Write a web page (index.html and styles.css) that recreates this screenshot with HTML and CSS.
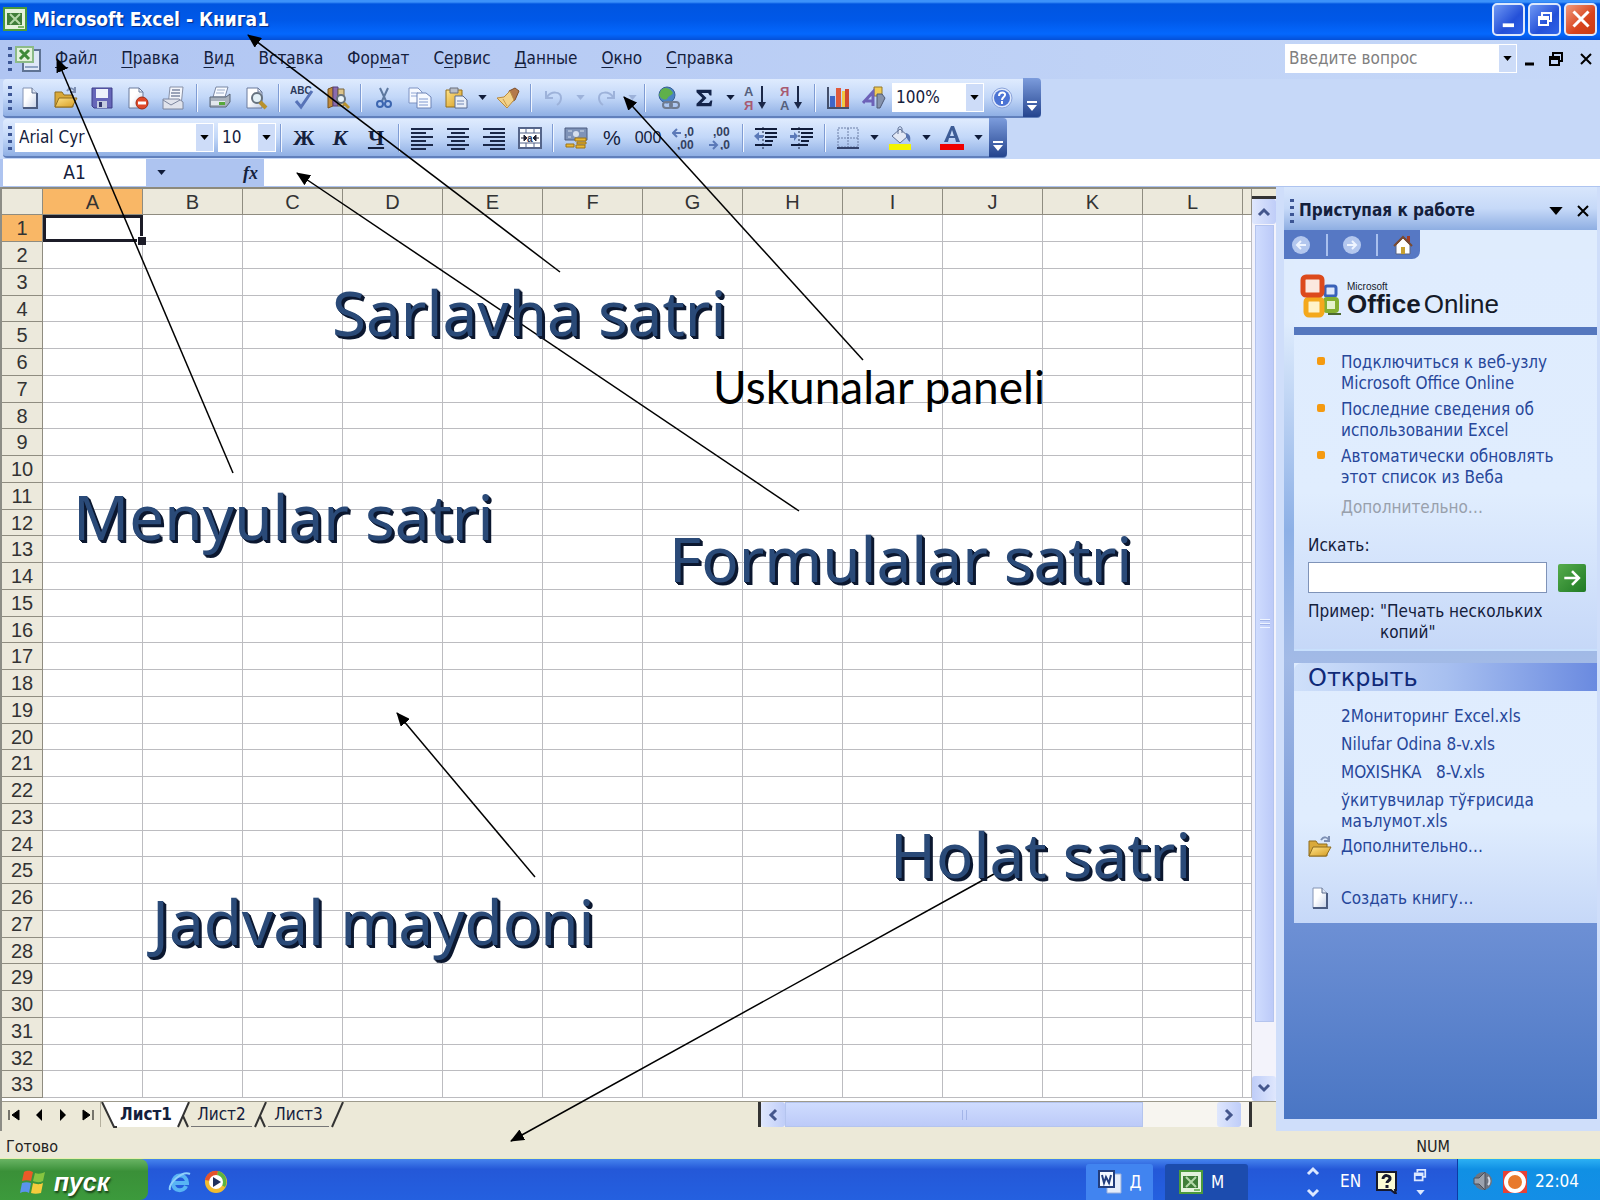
FILE: index.html
```html
<!DOCTYPE html>
<html lang="ru">
<head>
<meta charset="utf-8">
<title>Microsoft Excel - Книга1</title>
<link rel="stylesheet" href="styles.css">
</head>
<body>
<svg class="defs" aria-hidden="true">
  <defs>
    <linearGradient id="gold" x1="0" y1="0" x2="1" y2="1"><stop offset="0" stop-color="#ffe48a"/><stop offset="1" stop-color="#d49a20"/></linearGradient>
    <linearGradient id="paper" x1="0" y1="0" x2="1" y2="1"><stop offset="0.4" stop-color="#fff"/><stop offset="1" stop-color="#c3cfe6"/></linearGradient>
    <marker id="head" viewBox="0 0 14 12" refX="13" refY="6" markerWidth="14" markerHeight="12" markerUnits="userSpaceOnUse" orient="auto"><path d="M0 0L14 6L0 12z"/></marker>
  </defs>
</svg>
<svg class="sprite" aria-hidden="true">
  <symbol id="i-new" viewBox="0 0 24 24"><path d="M5 2h9l5 5v15H5z" fill="url(#paper)" stroke="#8494b4"/><path d="M19 7v15H5" fill="none" stroke="#4b5c80" stroke-width="2"/><path d="M14 2v5h5" fill="#dde6f6" stroke="#5d6c8c"/></symbol>
  <symbol id="i-open" viewBox="0 0 24 24"><path d="M1 21V6h7l2 3h9v12z" fill="#d9a93a" stroke="#8f6d1e"/><path d="M1 21l4-9h18l-5 9z" fill="url(#gold)" stroke="#8f6d1e"/><path d="M13 5c3-4 6-3 8 0m0-4v5h-5" fill="none" stroke="#7d8fb4" stroke-width="2"/></symbol>
  <symbol id="i-save" viewBox="0 0 24 24"><path d="M2 2h20v20H4l-2-2z" fill="#6666b8" stroke="#3d3d88"/><path d="M6 3h12v9H6z" fill="#eef2fb"/><path d="M7 15h10v7H7z" fill="#c4cbe0"/><path d="M9 16h3v5H9z" fill="#33366e"/></symbol>
  <symbol id="i-perm" viewBox="0 0 24 24"><path d="M3 2h10l4 4v16H3z" fill="url(#paper)" stroke="#6b7a9c"/><path d="M13 2v4h4" fill="none" stroke="#6b7a9c"/><circle cx="16" cy="17" r="6" fill="#e0492a" stroke="#a12c14"/><path d="M12 15.500h8v3h-8z" fill="#fff"/></symbol>
  <symbol id="i-mail" viewBox="0 0 24 24"><path d="M8 1h13l-2 19H6z" fill="#f4f6fb" stroke="#8790a6"/><path d="M10 4h8M9 7h9M9 10h9" stroke="#9aa3b8" stroke-width="2"/><path d="M1 13h16l4 3v7H1z" fill="#e0e3ec" stroke="#7d869e"/><path d="M1 14l8 5 9-5" fill="none" stroke="#7d869e"/></symbol>
  <symbol id="i-print" viewBox="0 0 24 24"><path d="M8 1h12l-3 10H5z" fill="#f7faff" stroke="#7b88a4"/><path d="M9 4h8M8 7h8" stroke="#9dadc8"/><path d="M2 11h16l4-3v8l-4 5H2z" fill="#a9b2bd" stroke="#5b6678"/><path d="M3 15h14v4H3z" fill="#e3e8ee"/><path d="M11 16h6v3h-6z" fill="#57a83a"/></symbol>
  <symbol id="i-preview" viewBox="0 0 24 24"><path d="M3 2h11l4 4v16H3z" fill="url(#paper)" stroke="#6b7a9c"/><path d="M14 2v4h4" fill="none" stroke="#6b7a9c"/><circle cx="13" cy="12" r="5" fill="#e3f0f6" stroke="#66727e" stroke-width="2"/><path d="M16 16l6 6" stroke="#b8912c" stroke-width="4"/></symbol>
  <symbol id="i-spell" viewBox="0 0 24 24"><text x="0" y="8" class="t-abc">ABC</text><path d="M6 15l5 6L22 5" fill="none" stroke="#5773b8" stroke-width="3"/></symbol>
  <symbol id="i-research" viewBox="0 0 24 24"><path d="M2 3l5-2v19l-5 2z" fill="#c08a3c" stroke="#77521f"/><path d="M7 1h5v19H7z" fill="#8a6cae" stroke="#553e78"/><path d="M12 3h6v17h-6z" fill="#dcc48c" stroke="#77623a"/><circle cx="15" cy="13" r="4" fill="#e8f3fa" stroke="#66727e" stroke-width="2"/><path d="M18 17l5 5" stroke="#b8912c" stroke-width="3"/></symbol>
  <symbol id="i-cut" viewBox="0 0 24 24"><path d="M8 2l6 13M16 2l-6 13" stroke="#5d789f" stroke-width="2"/><circle cx="8" cy="18" r="3" fill="none" stroke="#3c66b0" stroke-width="2"/><circle cx="16" cy="18" r="3" fill="none" stroke="#3c66b0" stroke-width="2"/></symbol>
  <symbol id="i-copy" viewBox="0 0 24 24"><path d="M1 2h9l4 4v11H1z" fill="#f6f9ff" stroke="#7e93c2"/><path d="M3 7h7M3 10h7" stroke="#8fa5d4"/><path d="M9 7h9l5 4v11H9z" fill="#f6f9ff" stroke="#6d83b6"/><path d="M11 13h9M11 16h9M11 19h9" stroke="#7f98cf"/></symbol>
  <symbol id="i-paste" viewBox="0 0 24 24"><path d="M2 4h16v17H2z" fill="url(#gold)" stroke="#946e18"/><path d="M6 2h8v5H6z" fill="#b9bec8" stroke="#6a6f7a"/><path d="M11 10h8l4 4v8H11z" fill="#e8eef8" stroke="#5b6c92"/><path d="M13 15h7M13 18h7" stroke="#7086b4"/></symbol>
  <symbol id="i-brush" viewBox="0 0 24 24"><path d="M13 5l6-3 4 3-4 9-4 2z" fill="#b4794a" stroke="#7e4f2c"/><path d="M1 12l7-1 6-6 4 9-7 8z" fill="#f2d28a" stroke="#b98a3f"/><path d="M7 13l4 7" stroke="#c99a4c"/></symbol>
  <symbol id="i-undo" viewBox="0 0 24 24"><path d="M4 5v7h7M5 11c4-6 14-6 14 1 0 3-1 5-4 7" fill="none" stroke="#9db2da" stroke-width="2"/></symbol>
  <symbol id="i-redo" viewBox="0 0 24 24"><path d="M20 5v7h-7M19 11C15 5 5 5 5 12c0 3 1 5 4 7" fill="none" stroke="#9db2da" stroke-width="2"/></symbol>
  <symbol id="i-link" viewBox="0 0 24 24"><circle cx="11" cy="9" r="8" fill="#4a83c4" stroke="#375f94"/><path d="M5 4c5-4 10-1 12 3-2 3-4 2-6 6-4 2-7-2-8-4z" fill="#5fb04a"/><rect x="7" y="16" width="9" height="6" rx="3" fill="none" stroke="#6f7b90" stroke-width="2"/><rect x="14" y="16" width="9" height="6" rx="3" fill="none" stroke="#6f7b90" stroke-width="2"/></symbol>
  <symbol id="i-sum" viewBox="0 0 24 24"><path d="M3 2h18v7h-2l-2-3H9l6 6-6 6h9l2-3h2l-1 7H3v-3l7-7-7-7z" fill="#14244a"/></symbol>
  <symbol id="i-sorta" viewBox="0 0 24 24"><text x="0" y="10" class="t-sort">А</text><text x="0" y="24" class="t-sort t-red">Я</text><path d="M18 0v18" stroke="#1a2748" stroke-width="2"/><path d="M14 16h8l-4 7z" fill="#1a2748"/></symbol>
  <symbol id="i-sortz" viewBox="0 0 24 24"><text x="0" y="10" class="t-sort t-red">Я</text><text x="0" y="24" class="t-sort">А</text><path d="M18 0v18" stroke="#1a2748" stroke-width="2"/><path d="M14 16h8l-4 7z" fill="#1a2748"/></symbol>
  <symbol id="i-chart" viewBox="0 0 24 24"><path d="M2 1v21h21" fill="none" stroke="#44506c" stroke-width="2"/><path d="M4 10h5v11H4z" fill="#3f66c8"/><path d="M10 2h5v19h-5z" fill="#e05a3c"/><path d="M16 5h3v16h-3z" fill="#f0c840"/><path d="M19 3h4v18h-4z" fill="#cf4a32"/></symbol>
  <symbol id="i-draw" viewBox="0 0 24 24"><path d="M12 1h8v9h-8z" fill="#f1cb52" stroke="#94782a"/><path d="M15 8h5l3 4-5 10h-3z" fill="#8693ac" stroke="#4f5a74"/><path d="M1 17L11 6v14M4 15h8" fill="none" stroke="#6d62b8" stroke-width="3"/></symbol>
  <symbol id="i-help" viewBox="0 0 24 24"><circle cx="12" cy="12" r="10" fill="#dfe9fc" stroke="#8ca4da"/><circle cx="12" cy="12" r="8" fill="#4c74d4"/><path d="M9 10c0-5 7-4 6-1 0 2-3 2-3 5m0 1v3" fill="none" stroke="#fff" stroke-width="2"/></symbol>
  <symbol id="i-left" viewBox="0 0 24 24"><path d="M1 3h22M1 7h15M1 11h22M1 15h15M1 19h22M1 23h15" stroke="#1a2748" stroke-width="2"/></symbol>
  <symbol id="i-center" viewBox="0 0 24 24"><path d="M1 3h22M5 7h14M1 11h22M5 15h14M1 19h22M5 23h14" stroke="#1a2748" stroke-width="2"/></symbol>
  <symbol id="i-right" viewBox="0 0 24 24"><path d="M1 3h22M8 7h15M1 11h22M8 15h15M1 19h22M8 23h15" stroke="#1a2748" stroke-width="2"/></symbol>
  <symbol id="i-merge" viewBox="0 0 24 24"><path d="M1 2h22v20H1z" fill="#fff" stroke="#55658a" stroke-width="2"/><path d="M1 7h22M1 17h22M8 2v5M16 2v5M8 17v5M16 17v5" stroke="#55658a"/><path d="M3 12h4M17 12h4M6 9l3 3-3 3zM18 9l-3 3 3 3z" fill="#223" stroke="#223"/><text x="9" y="16" class="t-abc">a</text></symbol>
  <symbol id="i-money" viewBox="0 0 24 24"><path d="M1 2h22v12H1z" fill="#7f93b8" stroke="#4c5c80"/><circle cx="12" cy="8" r="3" fill="#d6dfee"/><path d="M4 5h4M16 5h4M4 11h3" stroke="#d6dfee"/><path d="M11 12h11v3H11zM13 16h9v2h-9zM12 19h9v3h-9zM2 18h8v3H2z" fill="#e9b834" stroke="#9c7317"/></symbol>
  <symbol id="i-inc" viewBox="0 0 24 24"><path d="M1 7h8M5 3L1 7l4 4" fill="none" stroke="#5b79b8" stroke-width="2"/><text x="12" y="10" class="t-num">,0</text><text x="5" y="23" class="t-num">,00</text></symbol>
  <symbol id="i-dec" viewBox="0 0 24 24"><text x="5" y="10" class="t-num">,00</text><text x="12" y="23" class="t-num">,0</text><path d="M1 19h8M5 15l4 4-4 4" fill="none" stroke="#5b79b8" stroke-width="2"/></symbol>
  <symbol id="i-outdent" viewBox="0 0 24 24"><path d="M1 3h22M11 7h12M11 11h12M11 15h8M1 19h17" stroke="#101c3a" stroke-width="2"/><path d="M9 1v22" stroke="#101c3a" stroke-dasharray="2 2"/><path d="M0 10l5-4v3h4v3H5v3z" fill="#5b79b8"/></symbol>
  <symbol id="i-indent" viewBox="0 0 24 24"><path d="M1 3h22M11 7h12M11 11h12M11 15h8M1 19h17" stroke="#101c3a" stroke-width="2"/><path d="M9 1v22" stroke="#101c3a" stroke-dasharray="2 2"/><path d="M8 10L4 6v3H0v3h4v3z" fill="#5b79b8"/></symbol>
  <symbol id="i-border" viewBox="0 0 24 24"><path d="M2 2h20v19H2zM12 2v19M2 12h20" fill="none" stroke="#6d7ea6" stroke-dasharray="2 1"/><path d="M1 22h22" stroke="#33436c" stroke-width="2"/></symbol>
  <symbol id="i-fill" viewBox="0 0 24 24"><path d="M4 10l8-7 8 7-8 7z" fill="#e3e9f5" stroke="#5f6f92"/><path d="M10 8V3c0-3 4-3 4 0v4" fill="none" stroke="#5f6f92"/><path d="M18 7c4 1 5 4 4 9-2-1-3-4-4-5z" fill="#5874b0"/><path d="M1 18h22v6H1z" fill="#f4f400"/></symbol>
  <symbol id="i-color" viewBox="0 0 24 24"><path d="M4 16L11 0h3l6 16h-4l-1-4H9l-1 4zM10 10h4l-2-6z" fill="#3d5c96" fill-rule="evenodd"/><path d="M0 18h24v6H0z" fill="#f00000"/></symbol>
  <symbol id="i-excel" viewBox="0 0 24 24"><path d="M1 1h22v22H1z" fill="#e4f2dc" stroke="#4c9a3c" stroke-width="2"/><path d="M4 6h15v12H4z" fill="#3f7d38"/><path d="M7 7l10 10M17 7L7 17" stroke="#b4d8a8" stroke-width="2"/><path d="M15 20h6" stroke="#7bb96a" stroke-width="2"/></symbol>
  <symbol id="i-book" viewBox="0 0 28 28"><path d="M9 5h17v21H9z" fill="#dfe8f8" stroke="#5f7394" stroke-width="2"/><path d="M11 22h13" stroke="#8fa4c4" stroke-width="2"/><path d="M2 2h17v15H2z" fill="#e4f2dc" stroke="#8dbb88" stroke-width="2"/><path d="M6 5l9 9M15 5l-9 9" stroke="#3f8a3a" stroke-width="3"/></symbol>
  <symbol id="i-word" viewBox="0 0 24 24"><path d="M9 4h14v19H9z" fill="#e4ecfa" stroke="#9ab0dc"/><path d="M1 1h15v16H1z" fill="#f4f8ff" stroke="#223d7c" stroke-width="2"/><path d="M4 5l2 8 2-6 3 6 2-8" fill="none" stroke="#223d7c" stroke-width="2"/></symbol>
  <symbol id="i-restore" viewBox="0 0 16 16"><path d="M5 5V2h9v8h-3" fill="none" stroke="currentColor" stroke-width="2"/><path d="M2 6h9v8H2zM2 8h9" fill="none" stroke="currentColor" stroke-width="2"/></symbol>
  <symbol id="i-min" viewBox="0 0 16 16"><path d="M3 13h9" stroke="currentColor" stroke-width="3"/></symbol>
  <symbol id="i-x" viewBox="0 0 16 16"><path d="M3 3l10 10M13 3L3 13" stroke="currentColor" stroke-width="2"/></symbol>
  <symbol id="i-down" viewBox="0 0 10 6"><path d="M0 0h10L5 6z" fill="currentColor"/></symbol>
  <symbol id="i-more" viewBox="0 0 10 10"><path d="M0 0h10v2H0zM0 4h10L5 10z" fill="currentColor"/></symbol>
  <symbol id="i-chev" viewBox="0 0 14 14"><path d="M2 10l5-5 5 5" fill="none" stroke="currentColor" stroke-width="3"/></symbol>
</svg>

<header class="titlebar">
  <svg class="ico"><use href="#i-excel"/></svg>
  <h1>Microsoft Excel - Книга1</h1>
  <button class="win" aria-label="Свернуть"><svg class="ico20"><use href="#i-min"/></svg></button>
  <button class="win" aria-label="Восстановить"><svg class="ico16"><use href="#i-restore"/></svg></button>
  <button class="win close" aria-label="Закрыть"><svg class="ico24"><use href="#i-x"/></svg></button>
</header>

<nav class="menubar">
  <span class="grip"></span>
  <svg class="ico28"><use href="#i-book"/></svg>
  <div class="menus">
    <button><u>Ф</u>айл</button><button><u>П</u>равка</button><button><u>В</u>ид</button><button>Вст<u>а</u>вка</button><button>Фор<u>м</u>ат</button><button>С<u>е</u>рвис</button><button><u>Д</u>анные</button><button><u>О</u>кно</button><button><u>С</u>правка</button>
  </div>
  <div class="ask combo"><input type="text" placeholder="Введите вопрос" aria-label="Введите вопрос"><span class="drop"><svg class="tri"><use href="#i-down"/></svg></span></div>
  <button class="doc" aria-label="Свернуть окно"><svg class="ico16"><use href="#i-min"/></svg></button>
  <button class="doc" aria-label="Восстановить окно"><svg class="ico16"><use href="#i-restore"/></svg></button>
  <button class="doc" aria-label="Закрыть окно"><svg class="ico16"><use href="#i-x"/></svg></button>
</nav>

<div class="bars">
  <div class="toolbar">
    <span class="grip"></span>
    <button class="tb" aria-label="Создать"><svg class="ico"><use href="#i-new"/></svg></button>
    <button class="tb" aria-label="Открыть"><svg class="ico"><use href="#i-open"/></svg></button>
    <button class="tb" aria-label="Сохранить"><svg class="ico"><use href="#i-save"/></svg></button>
    <button class="tb" aria-label="Разрешения"><svg class="ico"><use href="#i-perm"/></svg></button>
    <button class="tb" aria-label="Сообщение"><svg class="ico"><use href="#i-mail"/></svg></button>
    <span class="sep"></span>
    <button class="tb" aria-label="Печать"><svg class="ico"><use href="#i-print"/></svg></button>
    <button class="tb" aria-label="Просмотр"><svg class="ico"><use href="#i-preview"/></svg></button>
    <span class="sep"></span>
    <button class="tb" aria-label="Орфография"><svg class="ico"><use href="#i-spell"/></svg></button>
    <button class="tb" aria-label="Справочники"><svg class="ico"><use href="#i-research"/></svg></button>
    <span class="sep"></span>
    <button class="tb" aria-label="Вырезать"><svg class="ico"><use href="#i-cut"/></svg></button>
    <button class="tb" aria-label="Копировать"><svg class="ico"><use href="#i-copy"/></svg></button>
    <button class="tb" aria-label="Вставить"><svg class="ico"><use href="#i-paste"/></svg></button>
    <button class="arrow" aria-label="Варианты вставки"><svg class="tri"><use href="#i-down"/></svg></button>
    <button class="tb" aria-label="Формат по образцу"><svg class="ico"><use href="#i-brush"/></svg></button>
    <span class="sep"></span>
    <button class="tb" aria-label="Отменить"><svg class="ico"><use href="#i-undo"/></svg></button>
    <button class="arrow off" aria-label="Список отмены"><svg class="tri"><use href="#i-down"/></svg></button>
    <button class="tb" aria-label="Вернуть"><svg class="ico"><use href="#i-redo"/></svg></button>
    <button class="arrow off" aria-label="Список возврата"><svg class="tri"><use href="#i-down"/></svg></button>
    <span class="sep"></span>
    <button class="tb" aria-label="Гиперссылка"><svg class="ico"><use href="#i-link"/></svg></button>
    <button class="tb" aria-label="Автосумма"><svg class="ico20"><use href="#i-sum"/></svg></button>
    <button class="arrow" aria-label="Функции"><svg class="tri"><use href="#i-down"/></svg></button>
    <button class="tb" aria-label="По возрастанию"><svg class="ico"><use href="#i-sorta"/></svg></button>
    <button class="tb" aria-label="По убыванию"><svg class="ico"><use href="#i-sortz"/></svg></button>
    <span class="sep"></span>
    <button class="tb" aria-label="Диаграмма"><svg class="ico"><use href="#i-chart"/></svg></button>
    <button class="tb" aria-label="Рисование"><svg class="ico"><use href="#i-draw"/></svg></button>
    <div class="combo zoom"><select aria-label="Масштаб"><option>100%</option></select><span class="drop"><svg class="tri"><use href="#i-down"/></svg></span></div>
    <button class="tb" aria-label="Справка"><svg class="ico"><use href="#i-help"/></svg></button>
    <button class="cap" aria-label="Параметры панели"><svg class="more"><use href="#i-more"/></svg></button>
  </div>
  <div class="toolbar">
    <span class="grip"></span>
    <div class="combo font"><select aria-label="Шрифт"><option>Arial Cyr</option></select><span class="drop"><svg class="tri"><use href="#i-down"/></svg></span></div>
    <div class="combo size"><select aria-label="Размер"><option>10</option></select><span class="drop"><svg class="tri"><use href="#i-down"/></svg></span></div>
    <span class="sep"></span>
    <button class="tb serif">Ж</button>
    <button class="tb serif"><i>К</i></button>
    <button class="tb serif"><u>Ч</u></button>
    <span class="sep"></span>
    <button class="tb" aria-label="По левому краю"><svg class="ico"><use href="#i-left"/></svg></button>
    <button class="tb" aria-label="По центру"><svg class="ico"><use href="#i-center"/></svg></button>
    <button class="tb" aria-label="По правому краю"><svg class="ico"><use href="#i-right"/></svg></button>
    <button class="tb" aria-label="Объединить"><svg class="ico"><use href="#i-merge"/></svg></button>
    <span class="sep"></span>
    <button class="tb" aria-label="Денежный формат"><svg class="ico"><use href="#i-money"/></svg></button>
    <button class="tb num">%</button>
    <button class="tb thou">000</button>
    <button class="tb" aria-label="Увеличить разрядность"><svg class="ico"><use href="#i-inc"/></svg></button>
    <button class="tb" aria-label="Уменьшить разрядность"><svg class="ico"><use href="#i-dec"/></svg></button>
    <span class="sep"></span>
    <button class="tb" aria-label="Уменьшить отступ"><svg class="ico"><use href="#i-outdent"/></svg></button>
    <button class="tb" aria-label="Увеличить отступ"><svg class="ico"><use href="#i-indent"/></svg></button>
    <span class="sep"></span>
    <button class="tb" aria-label="Границы"><svg class="ico"><use href="#i-border"/></svg></button>
    <button class="arrow" aria-label="Выбор границ"><svg class="tri"><use href="#i-down"/></svg></button>
    <button class="tb" aria-label="Заливка"><svg class="ico"><use href="#i-fill"/></svg></button>
    <button class="arrow" aria-label="Выбор заливки"><svg class="tri"><use href="#i-down"/></svg></button>
    <button class="tb" aria-label="Цвет текста"><svg class="ico"><use href="#i-color"/></svg></button>
    <button class="arrow" aria-label="Выбор цвета"><svg class="tri"><use href="#i-down"/></svg></button>
    <button class="cap" aria-label="Параметры панели"><svg class="more"><use href="#i-more"/></svg></button>
  </div>
</div>

<div class="formula">
  <input class="name" type="text" value="A1" aria-label="Имя">
  <button class="namedrop" aria-label="Список имён"><svg class="tri"><use href="#i-down"/></svg></button>
  <button class="fx"><i>fx</i></button>
  <input class="expr" type="text" aria-label="Строка формул">
</div>

<main class="work">
  <section class="book">
    <div class="sheetrow">
      <div class="sheet"><table id="grid"></table></div>
      <div class="vscroll">
        <span class="split"></span>
        <button class="sb" aria-label="Вверх"><svg class="ico14"><use href="#i-chev"/></svg></button>
        <div class="vthumb"><span></span></div>
        <div class="vtrack"></div>
        <button class="sb flip" aria-label="Вниз"><svg class="ico14"><use href="#i-chev"/></svg></button>
      </div>
    </div>
    <div class="tabs">
      <div class="tabnav">
        <button aria-label="Первый лист"><svg class="ico14" viewBox="0 0 14 14"><path d="M2 2v10M12 2v10L5 7z" stroke="#000" stroke-width="1"/></svg></button>
        <button aria-label="Предыдущий"><svg class="ico14" viewBox="0 0 14 14"><path d="M10 1v12L4 7z"/></svg></button>
        <button aria-label="Следующий"><svg class="ico14" viewBox="0 0 14 14"><path d="M4 1v12l6-6z"/></svg></button>
        <button aria-label="Последний лист"><svg class="ico14" viewBox="0 0 14 14"><path d="M12 2v10M2 2v10l7-5z" stroke="#000" stroke-width="1"/></svg></button>
      </div>
      <svg class="slash" viewBox="0 0 16 26"><path d="M1 0h15v25h-3z" fill="#fff"/><path d="M1 0l12 25h3" fill="none" stroke="#333" stroke-width="2"/></svg>
      <button class="tab on">Лист1</button>
      <svg class="slash" viewBox="0 0 16 26"><path d="M0 0h14L3 25H0z" fill="#fff"/><path d="M14 0L3 25M8 14l5 11" fill="none" stroke="#333" stroke-width="2"/></svg>
      <button class="tab">Лист2</button>
      <svg class="slash" viewBox="0 0 16 26"><path d="M14 0L3 25M8 14l5 11" fill="none" stroke="#333" stroke-width="2"/></svg>
      <button class="tab">Лист3</button>
      <svg class="slash" viewBox="0 0 16 26"><path d="M14 0L3 25" fill="none" stroke="#333" stroke-width="2"/></svg>
      <div class="hscroll">
        <button class="sb turnl" aria-label="Влево"><svg class="ico14"><use href="#i-chev"/></svg></button>
        <div class="hthumb"><span></span></div>
        <div class="htrack"></div>
        <button class="sb turnr" aria-label="Вправо"><svg class="ico14"><use href="#i-chev"/></svg></button>
      </div>
    </div>
  </section>

  <aside class="pane">
    <div class="panehead"><span class="grip"></span><h2>Приступая к работе</h2>
      <button aria-label="Другие области"><svg class="tri14"><use href="#i-down"/></svg></button>
      <button aria-label="Закрыть область"><svg class="ico16"><use href="#i-x"/></svg></button></div>
    <div class="panebody">
      <div class="panenav">
        <button aria-label="Назад"><svg class="ico20" viewBox="0 0 20 20"><circle cx="10" cy="10" r="9" fill="#b3c7ee"/><path d="M15 10H6m4-4l-4 4 4 4" fill="none" stroke="#eff5ff" stroke-width="2"/></svg></button>
        <span></span>
        <button aria-label="Вперёд"><svg class="ico20" viewBox="0 0 20 20"><circle cx="10" cy="10" r="9" fill="#b3c7ee"/><path d="M5 10h9m-4-4l4 4-4 4" fill="none" stroke="#eff5ff" stroke-width="2"/></svg></button>
        <span></span>
        <button aria-label="Домой"><svg class="ico20" viewBox="0 0 20 20"><path d="M14 1h3v6h-3z" fill="#a03c28"/><path d="M3 10l7-7 7 7v9H3z" fill="#fff" stroke="#5a6480"/><path d="M1 11l9-9 9 9" fill="none" stroke="#7a4a30" stroke-width="2"/><path d="M8 12h4v7H8z" fill="#c8a030"/></svg></button>
      </div>
      <div class="card first">
        <div class="logo">
          <svg viewBox="0 0 42 44"><rect x="25" y="12" width="11" height="10" rx="2" fill="#dfe8fa" stroke="#3a62b8" stroke-width="3"/><rect x="25" y="25" width="12" height="12" rx="2" fill="#e6f3cc" stroke="#84b030" stroke-width="4"/><path d="M28 40h13" stroke="#4c6a30" stroke-width="2"/><rect x="6" y="25" width="16" height="16" rx="3" fill="#fff3c8" stroke="#f4a81c" stroke-width="5"/><rect x="3" y="3" width="19" height="18" rx="3" fill="#fbe9df" stroke="#dc4a1c" stroke-width="5"/></svg>
          <div class="brand"><small>Microsoft</small><div><b>Office</b> <span>Online</span></div></div>
        </div>
        <div class="start">
          <ul>
            <li><a href="#">Подключиться к веб-узлу Microsoft Office Online</a></li>
            <li><a href="#">Последние сведения об использовании Excel</a></li>
            <li><a href="#">Автоматически обновлять этот список из Веба</a></li>
          </ul>
          <a class="dim" href="#">Дополнительно…</a>
          <label for="q">Искать:</label>
          <div class="search"><input id="q" type="text"><button aria-label="Найти"><svg viewBox="0 0 28 28"><path d="M5 14h16M14 6l8 8-8 8" fill="none" stroke="#fff" stroke-width="3"/></svg></button></div>
          <p class="example"><span>Пример:</span><span>"Печать нескольких копий"</span></p>
        </div>
      </div>
      <div class="card">
        <h3>Открыть</h3>
        <div class="files">
          <a href="#">2Мониторинг Excel.xls</a>
          <a href="#">Nilufar Odina 8-v.xls</a>
          <a href="#">MOXISHKA &nbsp; 8-V.xls</a>
          <a href="#">ўкитувчилар тўғрисида маълумот.xls</a>
        </div>
        <a class="iconlink" href="#"><svg class="ico"><use href="#i-open"/></svg>Дополнительно…</a>
        <a class="iconlink create" href="#"><svg class="ico"><use href="#i-new"/></svg>Создать книгу…</a>
      </div>
    </div>
  </aside>
</main>

<footer class="status"><span>Готово</span><span class="lock">NUM</span></footer>

<div class="taskbar">
  <button class="startbtn"><svg viewBox="0 0 28 28"><path d="M5 4c4-2 6-1 9 0l-2 9c-3-1-6-1-9 0z" fill="#ea5a28"/><path d="M16 5c3 1 6 1 10-1l-2 9c-4 2-7 1-10 0z" fill="#86c440"/><path d="M3 15c3-1 6-1 9 0l-2 10c-3-2-6-1-9 0z" fill="#5a94ee"/><path d="M14 15c3 1 6 2 10 0l-2 10c-4 1-7 1-10 0z" fill="#f6cc3c"/></svg>пуск</button>
  <button class="quick" aria-label="Internet Explorer"><svg class="ico" viewBox="0 0 24 24"><path d="M5 13h14c0-10-14-10-14 0 0 9 11 9 13 3" fill="none" stroke="#58b4f4" stroke-width="4"/><path d="M2 20C0 14 14 0 22 4" fill="none" stroke="#8fd0fa" stroke-width="2"/></svg></button>
  <button class="quick" aria-label="Media Player"><svg class="ico" viewBox="0 0 24 24"><circle cx="12" cy="12" r="11" fill="#f2bc30"/><path d="M12 12L1 10A11 11 0 0 1 14 1z" fill="#e4522c"/><path d="M12 12l2-11a11 11 0 0 1 7 16z" fill="#5cb440"/><circle cx="12" cy="12" r="7" fill="#fff"/><path d="M9 7v10l8-5z" fill="#20305c"/></svg></button>
  <div class="tasks">
    <button class="task"><svg class="ico"><use href="#i-word"/></svg>Д</button>
    <button class="task active"><svg class="ico"><use href="#i-excel"/></svg>М</button>
  </div>
  <div class="lang">
    <div class="updown first"><svg class="ico14"><use href="#i-chev"/></svg><svg class="ico14 flip"><use href="#i-chev"/></svg></div>
    <span>EN</span>
    <svg class="ico" viewBox="0 0 24 24"><path d="M2 2h19v18h-1l1 4-5-4H2z" fill="#fbfbd4" stroke="#15182c" stroke-width="2"/><path d="M8 9c0-5 8-4 7 0-1 2-3 2-3 4m0 2v3" fill="none" stroke="#15182c" stroke-width="3"/></svg>
    <div class="updown"><svg class="ico14"><use href="#i-restore"/></svg><svg class="tri"><use href="#i-down"/></svg></div>
  </div>
  <div class="tray">
    <svg class="ico" viewBox="0 0 24 24"><circle cx="12" cy="11" r="9" fill="#6d7480"/><path d="M3 8h5l6-6v18l-6-6H3z" fill="#9aa2ae" stroke="#4a505c"/><path d="M17 7c2 2 2 6 0 8" fill="none" stroke="#d4dae4" stroke-width="2"/></svg>
    <svg class="ico" viewBox="0 0 24 24"><path d="M0 1h24v22H0z" fill="#e64236"/><circle cx="12" cy="12" r="9" fill="#e87a2c" stroke="#fff" stroke-width="4"/></svg>
    <time>22:04</time>
  </div>
</div>

<div class="notes">
  <svg class="arrows" width="1600" height="1200" viewBox="0 0 1600 1200">
    <g stroke="#000" stroke-width="1.500">
      <path d="M560 272L248 35" marker-end="url(#head)"/>
      <path d="M233 473L57 59" marker-end="url(#head)"/>
      <path d="M799 511L297 173" marker-end="url(#head)"/>
      <path d="M863 360L624 97" marker-end="url(#head)"/>
      <path d="M535 877L397 713" marker-end="url(#head)"/>
      <path d="M994 874L511 1141" marker-end="url(#head)"/>
    </g>
  </svg>
  <span class="note title">Sarlavha satri</span>
  <span class="note menu">Menyular satri</span>
  <span class="note form">Formulalar satri</span>
  <span class="note area">Jadval maydoni</span>
  <span class="note state">Holat satri</span>
  <span class="note plain">Uskunalar paneli</span>
</div>
<script src="grid.js"></script>
</body>
</html>
```
FILE: styles.css
```css
* { box-sizing: border-box; }
body {
  margin: 0;
  min-height: 100vh;
  display: flex;
  flex-direction: column;
  position: relative;
  overflow: hidden;
  font: 17px/21px "DejaVu Sans Condensed", "DejaVu Sans", sans-serif;
  color: #14203c;
  background: #ece9d8;
}
button, input, select { font: inherit; color: inherit; margin: 0; padding: 0; border: 0; background: none; border-radius: 0; }
button { display: flex; align-items: center; justify-content: center; flex: none; }
input, select { min-width: 0; outline: 0; }
select { appearance: none; }
a { color: #27479a; text-decoration: none; }
h1, h2, h3, p, ul { margin: 0; padding: 0; }
svg { flex: none; display: block; }
.defs { position: absolute; width: 0; height: 0; }
.sprite { display: none; }
.ico, .ico24 { width: 24px; height: 24px; }
.ico28 { width: 32px; height: 28px; }
.ico20 { width: 20px; height: 20px; }
.ico16 { width: 16px; height: 16px; }
.ico14 { width: 14px; height: 14px; }
.tri { width: 9px; height: 5px; }
.tri14 { width: 14px; height: 8px; }
.more { width: 10px; height: 10px; }
.t-abc { font: bold 10px "Liberation Sans", sans-serif; fill: #2b3858; }
.t-sort { font: bold 13px "Liberation Sans", sans-serif; fill: #55607c; }
.t-red { fill: #a85a70; }
.t-num { font: bold 12px "Liberation Sans", sans-serif; fill: #33415f; }

.titlebar {
  height: 40px;
  display: flex;
  align-items: center;
  gap: 3px;
  padding: 0 3px 2px;
  color: #fff;
  background: linear-gradient(#3c92fa 0, #3c92fa 2px, #0055e0 4px, #0058e8 50%, #0468fe 85%, #0450d8);
}
.titlebar h1 { flex: 1; padding-left: 3px; font: bold 19px/24px "DejaVu Sans Condensed", "DejaVu Sans", sans-serif; text-shadow: 1px 1px 1px #0a2a80; }
.win { width: 33px; height: 33px; border: 2px solid #dce8fd; border-radius: 5px; background: linear-gradient(135deg, #6f98f4, #2450d8 60%, #2e62e8); }
.close { background: linear-gradient(135deg, #f09a7c, #d8431c 60%, #c83c14); }

.menubar {
  height: 39px;
  display: flex;
  align-items: center;
  padding: 0 1px 2px 8px;
  background: linear-gradient(90deg, #b0c5f2, #c6d8f8);
}
.grip { flex: none; width: 4px; height: 24px; background: repeating-linear-gradient(#3c5594 0, #3c5594 3px, transparent 3px, transparent 7px); }
.menus { display: flex; flex: 1; gap: 24px; padding-left: 11px; }
.menus u { text-underline-offset: 3px; }
.combo { display: flex; flex: none; height: 29px; background: #fff; }
.combo select, .combo input { flex: 1; padding-left: 4px; width: 10px; }
.drop { width: 17px; margin: 1px; display: flex; align-items: center; justify-content: center; background: #cddcf8; color: #000; }
.ask { width: 232px; }
.ask ::placeholder { color: #808080; opacity: 1; }
.doc { width: 26px; color: #000; }
.doc:last-child { margin-left: 4px; }

.bars { padding: 0 0 0 3px; display: flex; flex-direction: column; gap: 1px; background: #c6d8f8; align-items: flex-start; height: 80px; flex: none; }
.toolbar {
  height: 39px;
  display: flex;
  align-items: center;
  padding-left: 5px;
  border-bottom: 2px solid #6180bc;
  border-radius: 4px;
  background: linear-gradient(#dfebfe, #c2d7f8 50%, #8fafe4);
}
.tb { width: 36px; height: 34px; }
.arrow { width: 16px; height: 34px; color: #101c3a; }
.off { color: #9db2da; }
.sep { flex: none; width: 10px; height: 28px; background: linear-gradient(90deg, transparent 4px, #7f9cd4 4px, #7f9cd4 5px, #f0f6ff 5px, #f0f6ff 6px, transparent 6px); }
.cap { width: 18px; height: 39px; align-items: flex-end; padding-bottom: 6px; margin-left: 3px; color: #fff; border-radius: 0 4px 4px 0; background: linear-gradient(#7c9cdc, #24448e); }
.zoom { width: 92px; }
.font { width: 199px; margin: 0 4px 0 3px; }
.size { width: 58px; }
.serif { font: bold 22px/26px "Liberation Serif", serif; }
.num { font: 20px/24px "Liberation Sans", sans-serif; }
.thou { font: 16px/24px "Liberation Sans", sans-serif; }

.formula { display: flex; height: 28px; flex: none; padding: 0 0 1px 3px; background: #aec4f0; }
.name { width: 143px; background: #fff; text-align: center; font-size: 19px; }
.namedrop { width: 30px; color: #101c3a; }
.fx { width: 88px; padding-right: 6px; justify-content: flex-end; font: bold 18px/24px "Liberation Serif", serif; }
.expr { flex: 1; background: #fff; }

.work { display: flex; flex: 1; }
.book { flex: 1; min-width: 0; display: flex; flex-direction: column; border-left: 2px solid #8d8d86; }
.sheetrow { display: flex; }
.sheet { flex: 1; min-width: 0; overflow: hidden; background: #fff; border-top: 2px solid #8d8a7c; padding-bottom: 3px; }
table { width: 100%; table-layout: fixed; border-collapse: separate; border-spacing: 0; font: 20px/24px "Liberation Sans", sans-serif; color: #333; }
th, td { padding: 0; font-weight: normal; border: solid #bcbcc0; border-width: 0 1px 1px 0; }
th { background: #ece9dc; border-color: #8f8c80; }
thead tr { height: 26px; }
tbody tr { height: 27px; }
tbody tr:nth-child(4n) { height: 26px; }
.corner { width: 41px; }
.col { width: 100px; }
th.sel { background: #f9b766; }
td.cur { position: relative; border: 3px solid #1c1c28; background: #fff; }
td.cur::after { content: ""; position: absolute; right: -6px; bottom: -6px; width: 8px; height: 8px; background: #1c1c28; border: solid #fff; border-width: 1px 0 0 1px; }

.vscroll { width: 24px; display: flex; flex-direction: column; background: #f3f3fb; border-top: 2px solid #8d8a7c; }
.split { height: 10px; border-bottom: 3px solid #333; background: #ece9d8; }
.sb { height: 25px; color: #44568c; background: linear-gradient(90deg, #dfe7fd, #bfcdf8); border-radius: 3px; }
.flip { transform: rotate(180deg); }
.vthumb { flex: 1; margin: 1px 2px 0 3px; display: flex; align-items: center; justify-content: center; border: 1px solid #b4c4ee; background: linear-gradient(90deg, #cfdcfe, #bccaf8); }
.vthumb span { width: 10px; height: 9px; background: repeating-linear-gradient(#eef4ff 0, #eef4ff 1px, #a3b5e8 1px, #a3b5e8 2px, transparent 2px, transparent 4px); }
.vtrack { height: 54px; }

.tabs { display: flex; flex: 1; align-items: flex-start; padding: 1px 24px 0 0; background: linear-gradient(#9d9a8c 1px, #ece9d8 1px); }
.tabnav { display: flex; width: 99px; height: 25px; border-right: 1px solid #b4b09e; }
.tabnav button { width: 25px; flex: 0 1 auto; flex-basis: 25px; }
.slash { width: 16px; height: 26px; }
.tab { height: 25px; border-bottom: 1px solid #777; width: 61px; }
.on { background: #fff; font-weight: bold; border-color: #fff; width: 58px; }
.hscroll { width: 494px; height: 25px; margin-left: auto; display: flex; border: solid #333; border-width: 0 3px; background: #f7f5f0; }
.hscroll .sb { width: 24px; }
.turnl svg { transform: rotate(270deg); }
.turnr svg { transform: rotate(90deg); }
.hscroll .turnr { margin-right: 8px; }
.hthumb { flex: 1; display: flex; align-items: center; justify-content: center; border: 1px solid #b4c4ee; background: linear-gradient(#cfdcfe, #bccaf8); }
.hthumb span { width: 5px; height: 10px; border: solid #a3b5e8; border-width: 0 1px; }
.htrack { width: 74px; }

.pane { width: 324px; flex: none; padding: 0 3px 12px 8px; background: #cfdefa; display: flex; flex-direction: column; }
.panehead { display: flex; align-items: center; height: 43px; padding: 4px 3px 0 6px; gap: 5px; background: linear-gradient(#d8e6fc, #c6d9f8 50%, #8eaee2); }
.panehead h2 { flex: 1; font-size: 17px; line-height: 21px; }
.panehead button { width: 22px; color: #000; }
.panebody { flex: 1; background: linear-gradient(#dfecfd 0, #dfecfd 90px, #8db0e6 300px, #a2bae6 430px, #6c8fd4 700px, #4a76c4); }
.panenav { width: 136px; height: 29px; display: flex; align-items: center; justify-content: space-around; background: #5678c4; border-radius: 0 0 8px 0; }
.panenav span { width: 2px; height: 22px; background: #a9c0ee; }
.card { margin-left: 10px; background: linear-gradient(#dfecfe, #e0edfe 60%, #c6d8f8); }
.first.card { margin-bottom: 12px; border-bottom: 2px solid #c8e0fc; }
.logo { display: flex; gap: 5px; height: 76px; padding: 15px 0 0 6px; border-bottom: 8px solid #5577be; margin-bottom: 17px; }
.logo > svg { width: 42px; height: 44px; }
.brand { font: 26px/24px "Liberation Sans Narrow", "Liberation Sans", sans-serif; color: #141a28; padding-top: 8px; }
.brand small { display: block; font-size: 10px; line-height: 10px; }
.brand div { display: flex; gap: 3px; }
.start { padding: 0 22px 10px 14px; height: 297px; }
.start ul { list-style: none; display: flex; flex-direction: column; gap: 5px; padding: 0 16px 0 33px; }
.start li { position: relative; }
.start li::before { content: ""; position: absolute; left: -24px; top: 5px; width: 8px; height: 8px; border-radius: 2px; background: #f59a10; }
.dim { display: block; padding: 9px 0 0 33px; color: #98a0ac; }
.start label { display: block; padding-top: 17px; }
.search { display: flex; gap: 11px; align-items: center; padding-top: 6px; margin-right: -12px; }
.search input { width: 239px; height: 31px; background: #fff; border: 1px solid #7f93b8; }
.search button { width: 28px; height: 28px; background: linear-gradient(135deg, #56ac4c, #1f7a24); border-radius: 2px; }
.search svg { width: 24px; height: 24px; }
.example { display: flex; gap: 5px; padding-top: 8px; }
.card h3 { height: 28px; padding-left: 14px; border-radius: 8px 0 0 0; font: 24px/30px "DejaVu Sans", sans-serif; color: #102a78; background: linear-gradient(90deg, #cfe0fa, #a8c0f0 50%, #6a8ae0); }
.files { display: flex; flex-direction: column; gap: 7px; padding: 15px 40px 4px 47px; }
.iconlink { display: flex; align-items: center; gap: 9px; height: 21px; padding-left: 14px; }
.create { height: 50px; margin-top: 16px; }

.status { display: flex; justify-content: space-between; height: 28px; flex: none; padding: 5px 150px 0 6px; color: #222; border-bottom: 1px solid #e8f0b0; background: #ece9d8; font-size: 16px; }

.taskbar { display: flex; height: 41px; flex: none; align-items: center; color: #fff; background: linear-gradient(#4684ee, #2458d8 25%, #2460e0); }
.startbtn { width: 148px; height: 41px; gap: 7px; padding: 4px 20px 0 0; border-radius: 0 8px 8px 0; font: italic bold 25px/30px "Liberation Sans", sans-serif; text-shadow: 1px 2px 2px #184018; background: linear-gradient(#69b464, #3a9038 30%, #3c9a3c); }
.startbtn svg { width: 28px; height: 28px; }
.quick { width: 36px; padding-top: 4px; }
.startbtn + .quick { margin-left: 14px; }
.tasks { display: flex; gap: 12px; margin-left: auto; }
.task { width: 67px; height: 36px; gap: 8px; margin-top: 5px; background: #4184f0; border-radius: 3px 3px 0 0; }
.active { width: 83px; background: #1c4cae; padding-right: 10px; }
.lang { display: flex; align-items: center; gap: 14px; width: 209px; padding: 4px 0 0 58px; }
.updown { display: flex; flex-direction: column; align-items: center; gap: 8px; width: 14px; color: #dce8ff; }
.updown.first { margin-right: 6px; }
.tray { display: flex; align-items: center; gap: 8px; width: 143px; height: 41px; padding: 4px 0 0 13px; border-left: 1px solid #0c3ca4; background: linear-gradient(#2cb0f4, #1090e4 25%, #148ee6); }

.notes { position: absolute; inset: 0; pointer-events: none; }
.arrows { position: absolute; left: 0; top: 0; }
.note { position: absolute; white-space: nowrap; font: 62px/62px "Noto Sans", sans-serif; color: #2a4a78; text-shadow: 1px 1px 0 #0c1830, 2px 2px 0 #0c1830, 3px 3px 0 #0c1830; }
.title { left: 332px; top: 281px; }
.menu { left: 73px; top: 485px; }
.form { left: 669px; top: 527px; }
.area { left: 152px; top: 890px; }
.state { left: 890px; top: 823px; }
.plain { left: 713px; top: 364px; font: 46px/46px Lato, sans-serif; color: #000; text-shadow: none; }
```
FILE: grid.js
```js
// Builds the empty worksheet: columns A-L plus a narrow remainder, 33 rows.
const letters = "ABCDEFGHIJKL".split("");
const table = document.getElementById("grid");
const head = letters.map((c, i) => `<th class="col${i ? "" : " sel"}">${c}</th>`).join("");
let rows = "";
for (let r = 1; r <= 33; r++) {
  const cells = letters.map((c, i) => (r === 1 && i === 0 ? '<td class="cur"></td>' : "<td></td>")).join("");
  rows += `<tr><th${r === 1 ? ' class="sel"' : ""}>${r}</th>${cells}<td></td></tr>`;
}
table.innerHTML = `<thead><tr><th class="corner"></th>${head}<th></th></tr></thead><tbody>${rows}</tbody>`;
```
